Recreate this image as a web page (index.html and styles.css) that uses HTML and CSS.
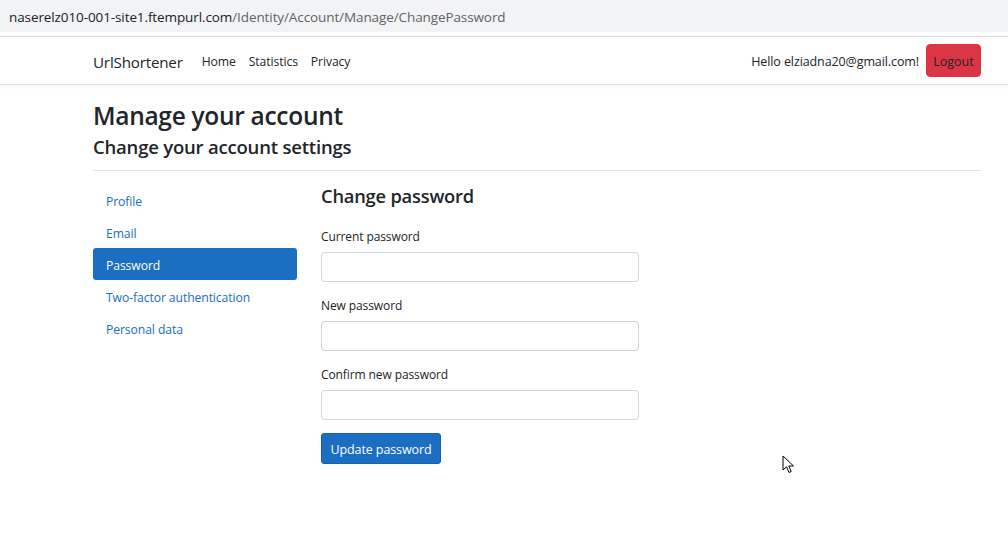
FILE: index.html
```html
<!DOCTYPE html>
<html lang="en">
<head>
<meta charset="utf-8">
<title>Change password - UrlShortener</title>
<link rel="stylesheet" href="styles.css">
</head>
<body>
<div class="urlbar"><span class="host">naserelz010-001-site1.ftempurl.com</span><span class="path">/Identity/Account/Manage/ChangePassword</span></div>
<header class="navbar">
  <div class="container nav-inner">
    <a class="brand" href="#">UrlShortener</a>
    <nav class="nav-links">
      <a href="#">Home</a>
      <a href="#">Statistics</a>
      <a href="#">Privacy</a>
    </nav>
    <div class="nav-right">
      <span class="hello">Hello elziadna20@gmail.com!</span>
      <button class="btn-logout">Logout</button>
    </div>
  </div>
</header>
<main class="container">
  <h1 class="title">Manage your account</h1>
  <h2 class="subtitle">Change your account settings</h2>
  <hr class="divider">
  <div class="layout">
    <ul class="side-nav">
      <li><a href="#">Profile</a></li>
      <li><a href="#">Email</a></li>
      <li><a class="active" href="#">Password</a></li>
      <li><a href="#">Two-factor authentication</a></li>
      <li><a href="#">Personal data</a></li>
    </ul>
    <section class="content">
      <h3 class="section-title">Change password</h3>
      <form class="form">
        <label class="field"><span class="label">Current password</span><input type="password" class="input"></label>
        <label class="field"><span class="label">New password</span><input type="password" class="input"></label>
        <label class="field"><span class="label">Confirm new password</span><input type="password" class="input"></label>
        <button type="button" class="btn-primary">Update password</button>
      </form>
    </section>
  </div>
</main>
<svg class="cursor" width="14" height="20" viewBox="0 0 14 20"><path d="M1 1 L1 15 L4.5 11.8 L7 17.5 L9.2 16.5 L6.8 11 L11.5 11 Z" fill="#fff" stroke="#000" stroke-width="1" stroke-linejoin="miter"/></svg>
</body>
</html>
```
FILE: styles.css
```css
* { box-sizing: border-box; }
html, body { margin: 0; padding: 0; }
body {
  font-family: "Open Sans", "Noto Sans", sans-serif;
  color: #212529;
  background: #fff;
  width: 1008px;
  height: 541px;
  overflow: hidden;
  position: relative;
}
.urlbar {
  height: 32px;
  background: #f1f3f4;
  padding-left: 9px;
  font-size: 13.5px;
  line-height: 34px;
  white-space: nowrap;
  letter-spacing: -0.1px;
}
.urlbar .host { color: #202124; }
.urlbar .path { color: #5f6368; }
.navbar {
  margin-top: 4px;
  border-top: 1px solid #dadce0;
  height: 49px;
  border-bottom: 1px solid #e2e2e2;
  box-shadow: 0 2px 4px rgba(0,0,0,0.04);
}
.container {
  width: 888px;
  margin-left: 93px;
}
.nav-inner {
  display: flex;
  align-items: center;
  height: 47px;
  padding-top: 2px;
}
.brand {
  color: #212529;
  text-decoration: none;
  font-size: 15.2px;
  margin-right: 19px;
  letter-spacing: -0.2px;
}
.nav-links { display: flex; gap: 13px; }
.nav-links a {
  color: #212529;
  text-decoration: none;
  font-size: 12.2px;
  letter-spacing: -0.1px;
}
.nav-right {
  margin-left: auto;
  display: flex;
  align-items: center;
  gap: 7px;
}
.hello { font-size: 12.5px; letter-spacing: -0.1px; }
.btn-logout {
  background: #dc3545;
  border: 1px solid #dc3545;
  border-radius: 4px;
  color: #212529;
  font-family: inherit;
  font-size: 12.5px;
  width: 55px;
  height: 33px;
  padding: 2px 0 0;
  margin-top: -2px;
}
.title {
  font-size: 24.5px;
  font-weight: 600;
  margin: 15px 0 0;
  line-height: 32px;
  letter-spacing: -0.3px;
}
.subtitle {
  font-size: 18.5px;
  font-weight: 600;
  margin: 2px 0 0;
  line-height: 26px;
  letter-spacing: -0.2px;
}
.divider {
  border: 0;
  border-top: 1px solid #e2e3e5;
  margin: 10px 0 0;
}
.layout {
  display: grid;
  grid-template-columns: 204px 1fr;
  column-gap: 24px;
  margin-top: 13px;
}
.side-nav {
  list-style: none;
  margin: 0;
  padding: 0;
  display: flex;
  flex-direction: column;
}
.side-nav a {
  display: block;
  height: 32px;
  line-height: 28px;
  padding: 4px 0 0 13px;
  font-size: 12.2px;
  color: #1b6ec2;
  text-decoration: none;
  border-radius: 3px;
  letter-spacing: -0.1px;
}
.side-nav a.active {
  background: #1b6ec2;
  color: #fff;
}
.section-title {
  font-size: 18.3px;
  font-weight: 600;
  margin: -1px 0 0;
  line-height: 26px;
  letter-spacing: -0.2px;
}
.form { margin-top: 20px; }
.field {
  display: block;
  margin-bottom: 16px;
}
.label {
  display: block;
  font-size: 12px;
  line-height: 16px;
  margin-bottom: 7px;
  letter-spacing: -0.1px;
}
.input {
  display: block;
  width: 318px;
  height: 30px;
  border: 1px solid #ced4da;
  border-radius: 4px;
  background: #fff;
}
.btn-primary {
  display: block;
  background: #1b6ec2;
  border: 1px solid #1861ac;
  color: #fff;
  border-radius: 3px;
  font-family: inherit;
  font-size: 12.5px;
  width: 120px;
  height: 31px;
  padding: 0;
  padding-top: 1px;
  margin-top: -3px;
  letter-spacing: -0.1px;
}
.cursor {
  position: absolute;
  left: 782px;
  top: 455px;
}
```
